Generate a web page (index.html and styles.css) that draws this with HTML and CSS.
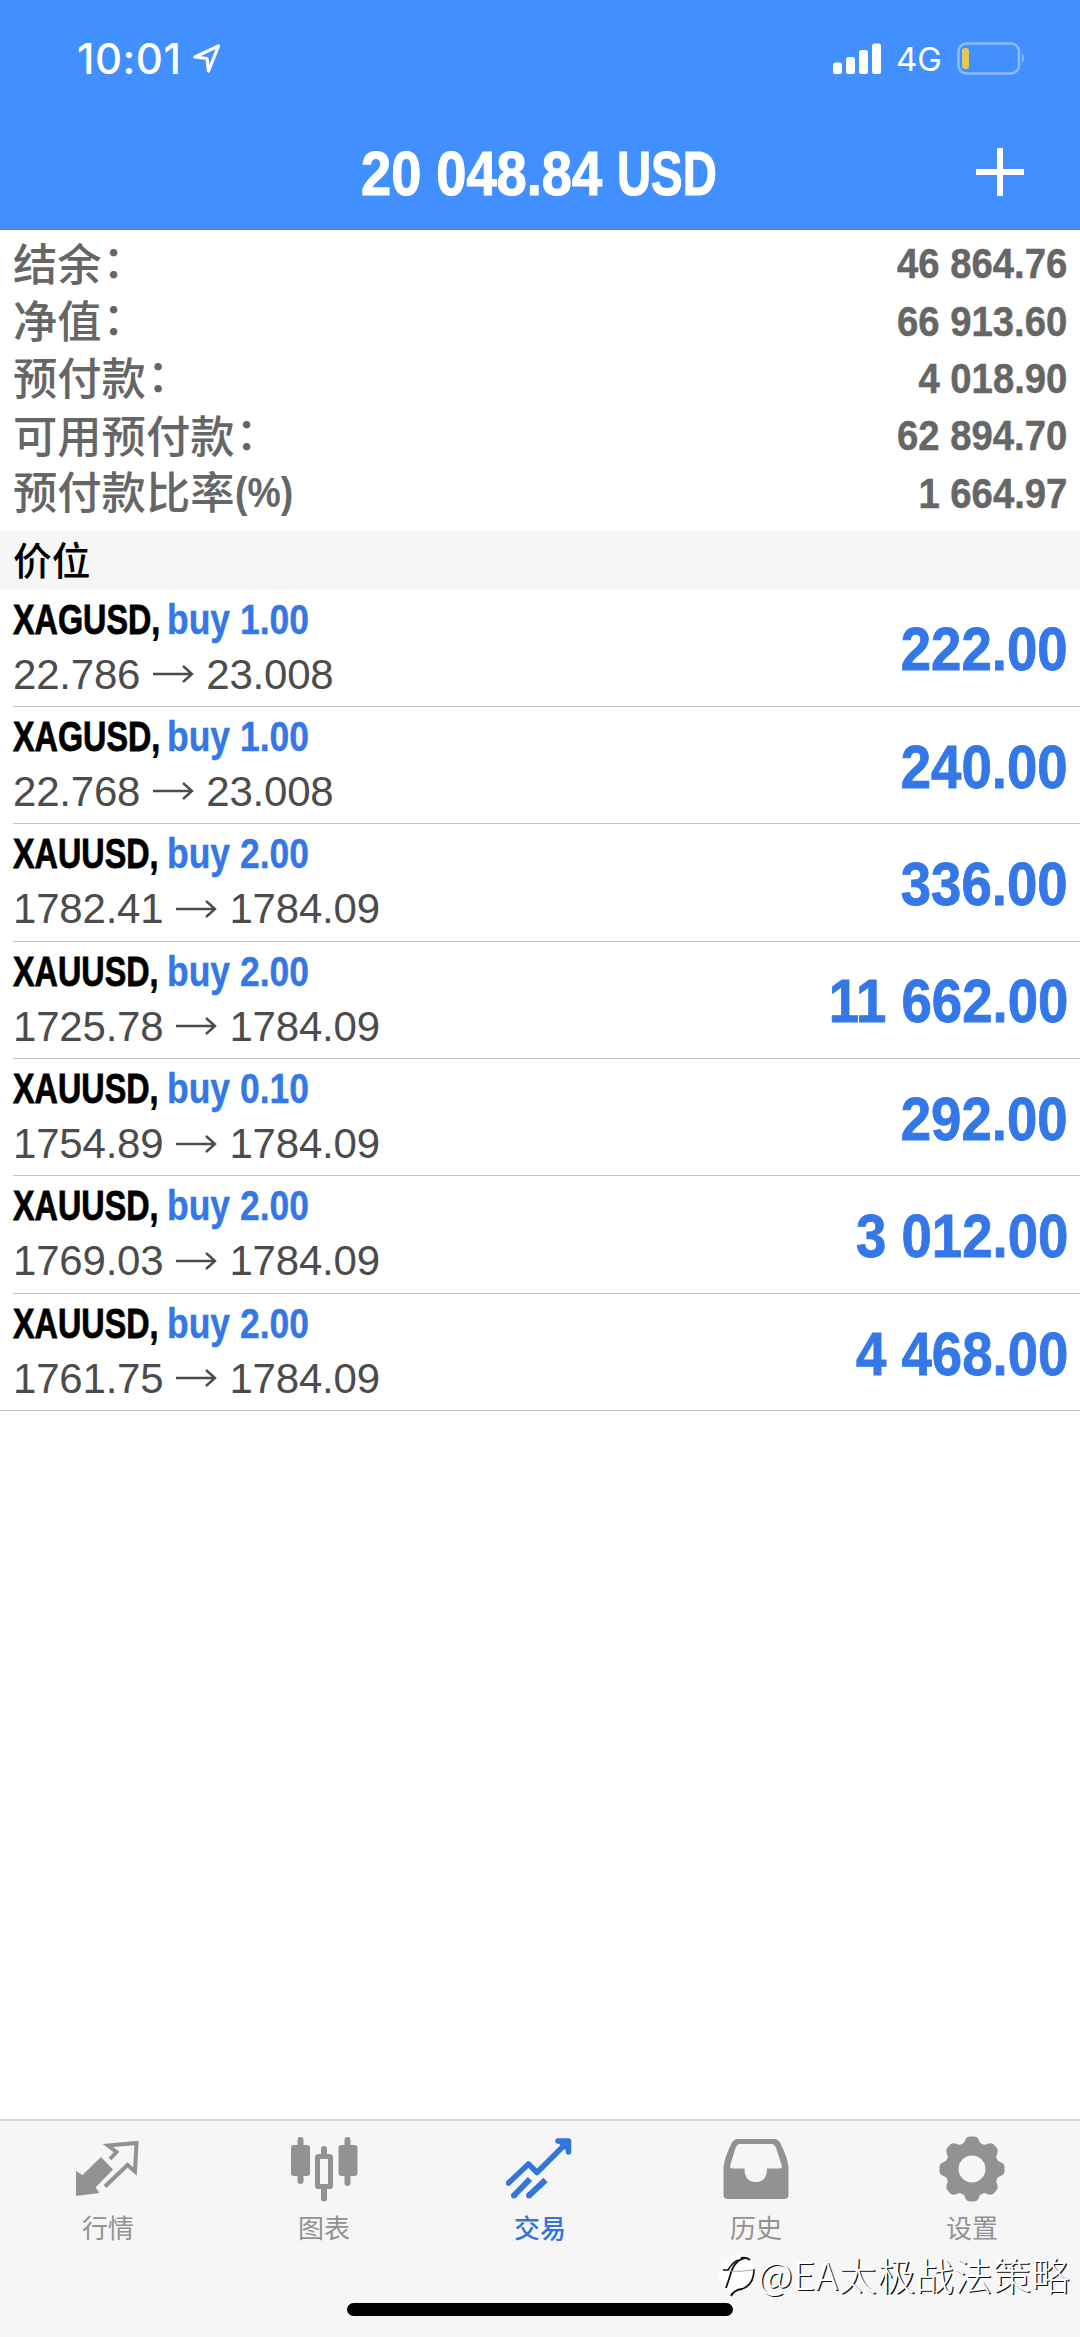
FILE: index.html
```html
<!DOCTYPE html>
<html lang="zh-CN">
<head>
<meta charset="utf-8">
<title>交易</title>
<link rel="stylesheet" href="styles.css">
</head>
<body>
<div class="app">
  <header class="top">
    <div class="status">
      <div class="status-left">
        <span class="time">10:01</span>
        <svg class="location" width="28" height="30" viewBox="0 0 28 30"><path d="M2 13 L25.500 2 L15.500 27 L14 14.500 Z" fill="none" stroke="#fff" stroke-width="3.200" stroke-linejoin="round"/></svg>
      </div>
      <div class="status-right">
        <svg width="49" height="32" viewBox="0 0 49 32" fill="#fff"><rect x="0" y="19.500" width="9" height="11.500" rx="2.500"/><rect x="13" y="14" width="9" height="17" rx="2.500"/><rect x="26" y="7" width="9" height="24" rx="2.500"/><rect x="39" y="0.500" width="9" height="30.500" rx="2.500"/></svg>
        <span class="network">4G</span>
        <svg width="70" height="34" viewBox="0 0 70 34"><rect x="1.500" y="1.500" width="60.500" height="30" rx="8" fill="none" stroke="#8cbcff" stroke-width="2.600"/><path d="M65 11.500 Q69 16.500 65 21.500 Z" fill="#8cbcff"/><rect x="5" y="6" width="7" height="21" rx="3" fill="#e3c85c"/></svg>
      </div>
    </div>
    <div class="nav">
      <h1 class="total"><span class="total-value">20 048.84</span><span class="total-unit">USD</span></h1>
      <svg class="plus" width="48" height="48" viewBox="0 0 48 48"><path d="M24 0 V48 M0 24 H48" stroke="#fff" stroke-width="6"/></svg>
    </div>
  </header>

  <section class="account">
    <div class="account-row"><span class="label">结余<span class="colon">：</span></span><span class="value">46 864.76</span></div>
    <div class="account-row"><span class="label">净值<span class="colon">：</span></span><span class="value">66 913.60</span></div>
    <div class="account-row"><span class="label">预付款<span class="colon">：</span></span><span class="value">4 018.90</span></div>
    <div class="account-row"><span class="label">可用预付款<span class="colon">：</span></span><span class="value">62 894.70</span></div>
    <div class="account-row"><span class="label">预付款比率<span class="percent">(%)</span></span><span class="value">1 664.97</span></div>
  </section>

  <h2 class="section-title">价位</h2>

  <main class="positions">
    <article class="position"><div class="info"><div class="deal"><span class="symbol">XAGUSD,</span><span class="side">buy 1.00</span></div><div class="prices">22.786<svg class="arrow" viewBox="0 0 66 20"><path d="M13 10 H51 M43 2 L52 10 L43 18"/></svg>23.008</div></div><span class="profit">222.00</span></article>
    <article class="position"><div class="info"><div class="deal"><span class="symbol">XAGUSD,</span><span class="side">buy 1.00</span></div><div class="prices">22.768<svg class="arrow" viewBox="0 0 66 20"><path d="M13 10 H51 M43 2 L52 10 L43 18"/></svg>23.008</div></div><span class="profit">240.00</span></article>
    <article class="position"><div class="info"><div class="deal"><span class="symbol">XAUUSD,</span><span class="side">buy 2.00</span></div><div class="prices">1782.41<svg class="arrow" viewBox="0 0 66 20"><path d="M13 10 H51 M43 2 L52 10 L43 18"/></svg>1784.09</div></div><span class="profit">336.00</span></article>
    <article class="position"><div class="info"><div class="deal"><span class="symbol">XAUUSD,</span><span class="side">buy 2.00</span></div><div class="prices">1725.78<svg class="arrow" viewBox="0 0 66 20"><path d="M13 10 H51 M43 2 L52 10 L43 18"/></svg>1784.09</div></div><span class="profit">11 662.00</span></article>
    <article class="position"><div class="info"><div class="deal"><span class="symbol">XAUUSD,</span><span class="side">buy 0.10</span></div><div class="prices">1754.89<svg class="arrow" viewBox="0 0 66 20"><path d="M13 10 H51 M43 2 L52 10 L43 18"/></svg>1784.09</div></div><span class="profit">292.00</span></article>
    <article class="position"><div class="info"><div class="deal"><span class="symbol">XAUUSD,</span><span class="side">buy 2.00</span></div><div class="prices">1769.03<svg class="arrow" viewBox="0 0 66 20"><path d="M13 10 H51 M43 2 L52 10 L43 18"/></svg>1784.09</div></div><span class="profit">3 012.00</span></article>
    <article class="position"><div class="info"><div class="deal"><span class="symbol">XAUUSD,</span><span class="side">buy 2.00</span></div><div class="prices">1761.75<svg class="arrow" viewBox="0 0 66 20"><path d="M13 10 H51 M43 2 L52 10 L43 18"/></svg>1784.09</div></div><span class="profit">4 468.00</span></article>
  </main>

  <footer class="tabbar">
    <nav class="tabs">
      <a class="tab">
        <svg width="68" height="68" viewBox="0 0 68 68"><path d="M2 37 L2 62 L25.500 59 L21.500 53.500 L39 35.500 L27 23 L8.500 41 Z" fill="#929292"/><path d="M36 25 L42.500 18 L34 11.500 L62.500 9 L61 37.500 L53.500 31 L31 52.500" fill="none" stroke="#929292" stroke-width="4"/></svg>
        <span>行情</span>
      </a>
      <a class="tab">
        <svg width="68" height="68" viewBox="0 0 68 68"><g stroke="#929292" stroke-width="6" stroke-linecap="round"><path d="M10.500 6 V47 M34 15 V22 M34 53 V64.500 M57.500 6 V49"/></g><rect x="1" y="11" width="19" height="31" rx="3" fill="#929292"/><rect x="48.500" y="11" width="19" height="31" rx="3" fill="#929292"/><rect x="27.500" y="22.500" width="13" height="30" rx="1" fill="#f6f6f6" stroke="#929292" stroke-width="5"/></svg>
        <span>图表</span>
      </a>
      <a class="tab active">
        <svg width="68" height="68" viewBox="0 0 68 68"><g fill="none" stroke="#3375dc" stroke-width="5.500" stroke-linecap="round" stroke-linejoin="round"><path d="M2.500 49 L22.500 30 L31 38.500 L60 9.500"/><path d="M52 7 H62.500 V18"/></g><path d="M62.500 7 L50 7 L62.500 19 Z" fill="#3375dc"/><path d="M24 45 L8 61.500 M39.500 46 L23 61.500" stroke="#3375dc" stroke-width="6"/><circle cx="8" cy="61.500" r="3" fill="#3375dc"/><circle cx="23" cy="61.500" r="3" fill="#3375dc"/></svg>
        <span>交易</span>
      </a>
      <a class="tab">
        <svg width="68" height="68" viewBox="0 0 68 68"><path fill="#929292" fill-rule="evenodd" d="M16 5 H52 Q56 5 58 8.500 Q66 24 66.500 34 V61 Q66.500 65 62.500 65 H5.500 Q1.500 65 1.500 61 V34 Q2 24 10 8.500 Q12 5 16 5 Z M18 10 Q15 10 13.500 14 L8 32 Q8 34.500 10 34.500 H22.500 Q22.500 48 34 48 Q45 48 45 34.500 H57.500 Q60 34.500 60 32 L54 14 Q52.500 10 49.500 10 Z"/></svg>
        <span>历史</span>
      </a>
      <a class="tab">
        <svg width="68" height="68" viewBox="0 0 68 68"><g fill="#929292"><circle cx="34" cy="35" r="27"/><g id="teeth"><path id="tooth" d="M23 12 Q26 10 27.500 5.500 Q29 2.500 32 2.500 H36 Q39 2.500 40.500 5.500 Q42 10 45 12 Z"/><use href="#tooth" transform="rotate(45 34 35)"/><use href="#tooth" transform="rotate(90 34 35)"/><use href="#tooth" transform="rotate(135 34 35)"/></g><use href="#teeth" transform="rotate(180 34 35)"/></g><circle cx="34" cy="35" r="13.500" fill="#f6f6f6"/></svg>
        <span>设置</span>
      </a>
    </nav>
    <div class="home-indicator"></div>
  </footer>

  <div class="watermark">
    <svg width="40" height="46" viewBox="0 0 40 46"><circle cx="18" cy="21" r="18" fill="#fff"/><g fill="none" stroke="#111" stroke-width="1.800"><path d="M7 36 L11 24 Q15 8 26 6"/><path d="M4 18 H9 Q14 10 19 8" stroke-width="1.500"/><path d="M22 6 Q28 5 31 8 M35 17 Q35 33 23 37 Q15 38 12 44"/></g><path d="M10 19 Q22 20 35 18" fill="none" stroke="#aaa" stroke-width="1"/></svg>
    <span class="handle">@EA太极战法策略</span>
  </div>
</div>
</body>
</html>
```
FILE: styles.css
```css
* { box-sizing: border-box; margin: 0; padding: 0; }

body {
  width: 1080px;
  height: 2337px;
  background: #fff;
  font-family: "Liberation Sans", "Noto Sans CJK SC", sans-serif;
  overflow: hidden;
}

svg { display: block; flex: none; }

.app {
  position: relative;
  display: flex;
  flex-direction: column;
  height: 2337px;
}

.top {
  flex: none;
  height: 230px;
  background: #428fff;
  color: #fff;
  border-bottom: 2px solid #4f8ae6;
}

.status {
  display: flex;
  justify-content: space-between;
  height: 118px;
  padding: 0 53px 0 77px;
}

.status-left, .status-right { display: flex; align-items: center; }

.time {
  width: 116px;
  font: 500 42px/50px Inter, sans-serif;
  letter-spacing: 0.5px;
}

.network {
  width: 61px;
  margin-left: 14px;
  font: 400 33px/40px Inter, sans-serif;
}

.nav {
  display: grid;
  grid-template-columns: 1fr auto 1fr;
  align-items: center;
  height: 112px;
  padding-right: 56px;
}

.total {
  grid-column: 2;
  display: flex;
  width: 358px;
  margin: 0 0 2px 56px;
  font-size: 63px;
  line-height: 80px;
  white-space: nowrap;
  -webkit-text-stroke: 1.200px #fff;
}

.total-value { width: 256px; transform: scaleX(0.86); transform-origin: left; }
.total-unit { width: 102px; transform: scaleX(0.75); transform-origin: left; }
.plus { justify-self: end; margin-bottom: 5px; }

.account { flex: none; height: 301px; padding: 5px 13px 0; }

.account-row {
  display: flex;
  justify-content: space-between;
  align-items: center;
  height: 57.4px;
  color: #666;
}

.label {
  display: flex;
  padding-bottom: 4px;
  font: 500 44.300px/50px "Noto Sans CJK SC", sans-serif;
}

.colon { margin: -3px 0 3px 1px; }

.percent {
  font: 700 42px/50px "Liberation Sans", sans-serif;
  transform: scaleX(0.89);
  transform-origin: left;
  padding-top: 3px;
}

.value {
  font-size: 43px;
  font-weight: 700;
  transform: scaleX(0.89);
  transform-origin: right;
  -webkit-text-stroke: 0.500px #666;
}

.section-title {
  flex: none;
  height: 58.500px;
  padding-left: 13px;
  background: #f6f6f6;
  color: #000;
  font: 500 38.700px/55px "Noto Sans CJK SC", sans-serif;
}

.positions { flex: 1; }

.position {
  position: relative;
  display: flex;
  justify-content: space-between;
  height: 117.4px;
  padding: 2px 13px 0;
}

.position::after {
  content: "";
  position: absolute;
  left: 13px;
  right: 0;
  bottom: 0;
  height: 1px;
  background: #c4c4c6;
}

.position:last-child::after { left: 0; }

.deal {
  display: flex;
  height: 55px;
  font-size: 42px;
  font-weight: 700;
  line-height: 55px;
  white-space: nowrap;
}

.symbol {
  width: 154px;
  color: #000;
  transform: scaleX(0.77);
  transform-origin: left;
  -webkit-text-stroke: 0.800px #000;
}

.side {
  color: #3478e8;
  transform: scaleX(0.845);
  transform-origin: left;
  -webkit-text-stroke: 0.400px #3478e8;
}

.prices {
  display: flex;
  align-items: center;
  height: 55px;
  color: #4c4c4c;
  font-size: 42px;
  letter-spacing: -0.200px;
  line-height: 55px;
}

.arrow { width: 66px; height: 20px; fill: none; stroke: #4c4c4c; stroke-width: 2.400; }

.profit {
  align-self: center;
  color: #3478e8;
  font-size: 62px;
  font-weight: 700;
  line-height: 70px;
  transform: translateX(1px) scaleX(0.88);
  transform-origin: right;
  -webkit-text-stroke: 0.900px #3478e8;
}

.tabbar {
  flex: none;
  display: flex;
  flex-direction: column;
  justify-content: space-between;
  align-items: center;
  height: 218px;
  padding-bottom: 21px;
  background: #f6f6f6;
  border-top: 2px solid #d4d4d4;
}

.tabs { display: grid; grid-template-columns: repeat(5, 1fr); width: 1080px; padding-top: 13px; }

.tab {
  display: flex;
  flex-direction: column;
  align-items: center;
  gap: 6px;
  color: #929292;
  font: 400 26px/38px "Noto Sans CJK SC", sans-serif;
}

.active { color: #3375dc; font-weight: 500; }

.home-indicator { width: 386px; height: 13px; border-radius: 7px; background: #000; }

.watermark {
  position: absolute;
  left: 719px;
  top: 2247px;
  display: flex;
  align-items: center;
  color: #fff;
  font: 300 38px/56px "Noto Sans CJK SC", sans-serif;
  letter-spacing: 0.600px;
  text-shadow: 1.300px 1.300px 0.300px #111;
  white-space: nowrap;
}

.handle { margin: -1px 0 1px -1px; }
```
